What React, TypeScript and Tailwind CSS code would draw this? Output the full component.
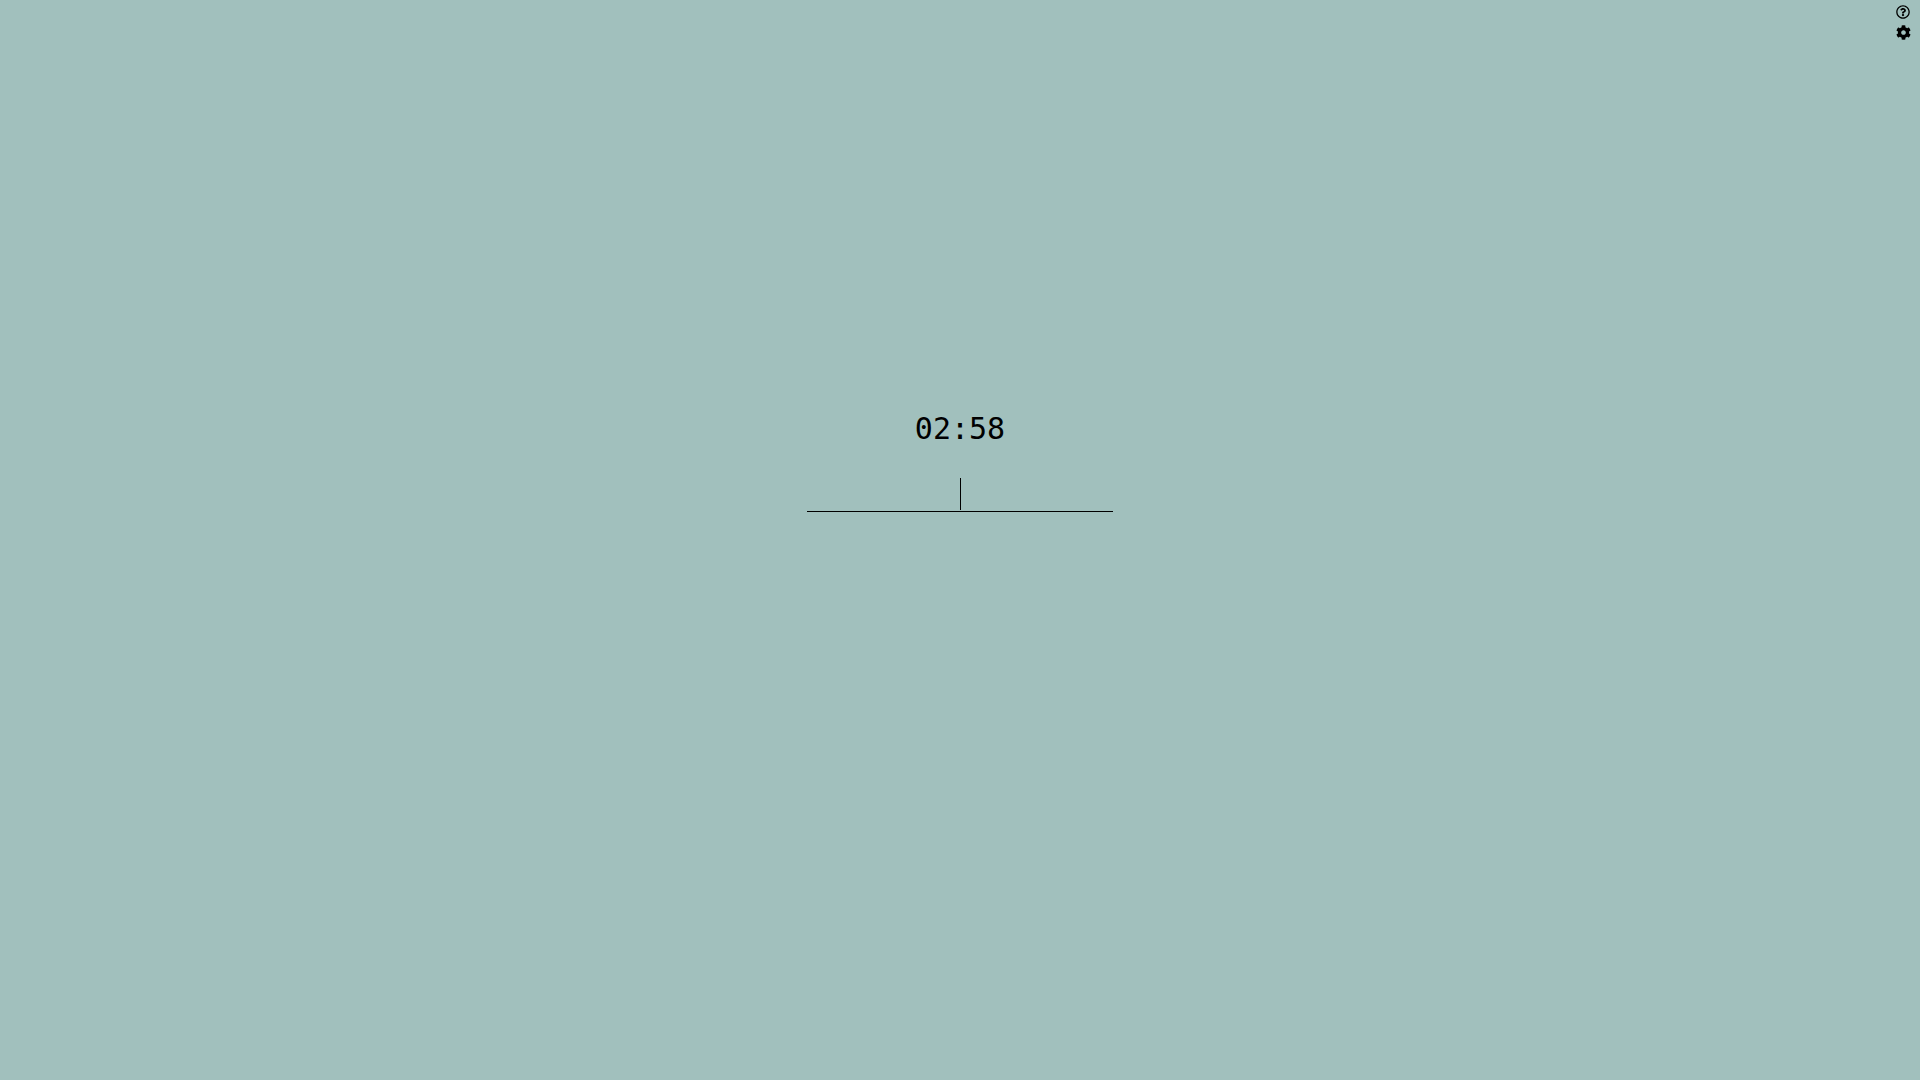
import { FaRegQuestionCircle, FaCog } from "react-icons/fa";

export default function App() {
  return (
    <div className="relative h-screen w-full overflow-hidden bg-[#a1c0bd] text-black">
      <div className="absolute right-[3px] top-[5px] flex w-[28px] flex-col items-center gap-[6px]">
        <FaRegQuestionCircle className="h-[14px] w-[14px]" />
        <FaCog className="h-[15px] w-[15px]" />
      </div>
      <div className="flex flex-col items-center pt-[410px]">
        <div className="h-[38px] text-[30px] leading-[38px] font-['DejaVu_Sans_Mono',monospace]">02:58</div>
        <div className="mt-[30px] flex h-[34px] w-[306px] justify-center border-b border-black">
          <div className="h-[32px] w-px bg-black" />
        </div>
      </div>
    </div>
  );
}
